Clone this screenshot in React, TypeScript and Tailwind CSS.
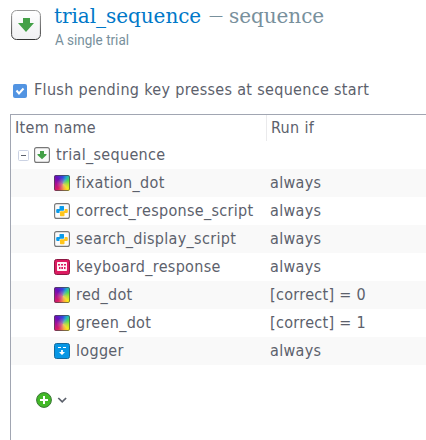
import React from "react";

type Kind = "dot" | "python" | "keyboard" | "logger";

function SequenceIcon() {
  return (
    <svg width="16" height="16" viewBox="0 0 16 16" className="block shrink-0">
      <rect x=".6" y=".6" width="14.8" height="14.8" rx="2" fill="#fafafa" stroke="#777" strokeWidth="1.1" />
      <path d="M6 4h4v3h2.500v1L8 12.200 3.500 8V7H6z" fill="#43a047" />
    </svg>
  );
}

function ItemIcon({ kind }: { kind: Kind }) {
  if (kind === "dot") {
    return (
      <span className="relative block size-4 shrink-0 overflow-hidden rounded-[2px] bg-[radial-gradient(circle_at_55%_55%,#d8b0a0b0,transparent_50%),conic-gradient(from_0deg_at_55%_55%,#3448e0,#20b0c8_30deg,#4ade50_60deg,#a8ee20_95deg,#f8ea18_135deg,#ffb030_165deg,#f06a50_190deg,#d81c68_225deg,#b01090_265deg,#6a0fb8_315deg,#3448e0)]">
        <span className="absolute inset-0 rounded-[2px] border border-[#484848]/70" />
      </span>
    );
  }
  if (kind === "python") {
    return (
      <svg width="16" height="16" viewBox="0 0 16 16" className="shrink-0">
        <rect x=".6" y=".6" width="14.8" height="14.8" rx="2" fill="#fafafa" stroke="#777" strokeWidth="1.1" />
        <path d="M6 3h3.500q.5 0 .5.5V7q0 .7-.7.7H6.500q-1 0-1 1V10H3.200Q2.200 10 2.200 9V7q0-1 1-1h2.300V3.500q0-.5.5-.5z" fill="#0a9bea" />
        <path d="M10.600 6h2.200q1 0 1 1v2q0 1-1 1h-2.300v2.500q0 .7-.7.700H6.700q-.7 0-.7-.7V9.200q0-.9.9-.9h2.700q1 0 1-1z" fill="#ffc51b" />
      </svg>
    );
  }
  if (kind === "keyboard") {
    return (
      <svg width="16" height="16" viewBox="0 0 16 16" className="shrink-0">
        <rect x=".5" y=".5" width="15" height="15" rx="2" fill="#dc1b61" stroke="#8d1742" />
        <rect x="3" y="3" width="10" height="9" rx=".7" fill="#fff5f8" />
        <path d="M4 5h2v1.500H4zm3 0h2v1.500H7zm3 0h2v1.500h-2zM5 8h1.500v2H5zm2.300 0h1.700v2H7.300zm2.700 0h1.500v2H10z" fill="#dc1b61" />
      </svg>
    );
  }
  return (
    <svg width="16" height="16" viewBox="0 0 16 16" className="shrink-0">
      <rect x=".5" y=".5" width="15" height="15" rx="2" fill="#0797e5" stroke="#176a9c" />
      <path d="M4 4h3v1H4zm5 0h3v1H9zM7.100 7h1.800v2H11l-3 3-3-3h2.100z" fill="#fff" />
    </svg>
  );
}

const rows: { kind: Kind; name: string; run: string }[] = [
  { kind: "dot", name: "fixation_dot", run: "always" },
  { kind: "python", name: "correct_response_script", run: "always" },
  { kind: "python", name: "search_display_script", run: "always" },
  { kind: "keyboard", name: "keyboard_response", run: "always" },
  { kind: "dot", name: "red_dot", run: "[correct] = 0" },
  { kind: "dot", name: "green_dot", run: "[correct] = 1" },
  { kind: "logger", name: "logger", run: "always" },
];

export default function App() {
  return (
    <main className="flex h-[440px] w-[426px] flex-col overflow-hidden bg-white font-['DejaVu_Sans_Condensed','DejaVu_Sans',sans-serif] text-[16px] tracking-[.32px] whitespace-nowrap text-[#5c616c]">
      <header className="flex h-[78px] shrink-0 pl-[11px]">
        <svg width="30" height="32" viewBox="0 0 30 32" className="mt-[9px] shrink-0">
          <defs>
            <linearGradient id="tile" x2="0" y2="1"><stop stopColor="#fff" /><stop offset="1" stopColor="#f0f0f2" /></linearGradient>
            <linearGradient id="edge" x2="0" y2="1"><stop stopColor="#999" /><stop offset="1" stopColor="#333" /></linearGradient>
          </defs>
          <rect x=".6" y="1.500" width="28.8" height="29" rx="5" fill="url(#tile)" stroke="url(#edge)" />
          <path d="M12 9h7v5h4L15 23 7 14h5z" fill="#43a047" />
        </svg>
        <div className="flex flex-col pl-[13px]">
          <h1 className="flex h-[31px] items-center font-['DejaVu_Serif',serif] text-[20px] font-normal tracking-[-.05px]">
            <span className="w-[155px] text-[#0078c8]">trial_sequence</span>
            <span className="w-[20px] text-[14px] text-[#78909c]">—</span>
            <span className="text-[#78909c]">sequence</span>
          </h1>
          <p className="h-[18px] origin-left scale-x-[.9] pl-px font-[Roboto,sans-serif] text-[15px] leading-[18px] tracking-normal text-[#78909c]">A single trial</p>
        </div>
      </header>
      <label className="flex h-[24px] shrink-0 items-center pl-[13px]">
        <svg width="14" height="14" viewBox="0 0 14 14" className="mt-px"><rect width="14" height="14" rx="2" fill="#5294e2" /><path d="m3.500 6.500 2.500 3 4.500-5" fill="none" stroke="#fff" strokeWidth="2" /></svg>
        <span className="ml-[7px]">Flush pending key presses at sequence start</span>
      </label>
      <section className="mt-3 ml-[10px] flex grow flex-col border-t border-l border-[#a1a6b2]">
        <div className="flex h-[26px] shrink-0 items-center">
          <span className="w-[255px] pl-1">Item name</span>
          <span className="flex h-[26px] items-center border-l border-[#eaeaec] pl-1">Run if</span>
        </div>
        <div className="flex h-7 shrink-0 items-center pl-[7px]">
          <svg width="11" height="11" viewBox="0 0 11 11"><rect x=".5" y=".5" width="10" height="10" rx="1" fill="#fff" stroke="#cbd2e3" /><path d="M3 5.500h5" stroke="#5c616c" /></svg>
          <span className="ml-[5px]"><SequenceIcon /></span><span className="ml-[6px]">trial_sequence</span>
        </div>
        {rows.map((row) => (
          <div key={row.name} className="flex h-7 shrink-0 items-center odd:bg-[#f9f9f9]">
            <span className="flex w-[259px] items-center gap-[6px] pl-[43px]"><ItemIcon kind={row.kind} />{row.name}</span>
            <span>{row.run}</span>
          </div>
        ))}
        <div className="mt-[27px] flex items-center pl-[25px]">
          <svg width="16" height="16" viewBox="0 0 16 16"><circle cx="8" cy="8" r="7.400" fill="#42b927" stroke="#397535" /><path d="M8 4v8M4 8h8" stroke="#fff" strokeWidth="2" /></svg>
          <svg width="10" height="8" viewBox="0 0 10 8" className="ml-[5px]"><path d="m1.300 2 3.900 3.900L9.100 2" fill="none" stroke="#5c616c" strokeWidth="1.700" /></svg>
        </div>
      </section>
    </main>
  );
}
